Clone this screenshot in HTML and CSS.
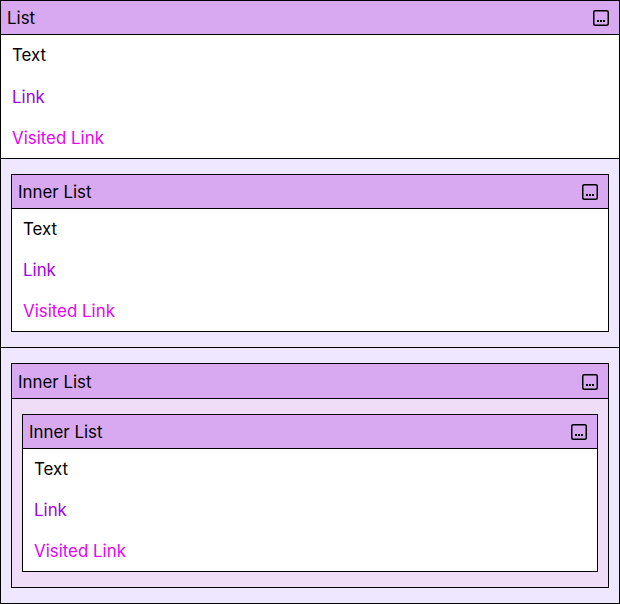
FILE: index.html
```html
<!DOCTYPE html>
<html lang="en">
<head>
<meta charset="utf-8">
<title>List</title>
<link rel="stylesheet" href="styles.css">
</head>
<body>
<svg class="defs" width="0" height="0" aria-hidden="true">
  <symbol id="more" viewBox="0 0 16 16">
    <rect x=".75" y=".75" width="14.5" height="14.5" rx="1.5" fill="none" stroke="#000" stroke-width="1.5"/>
    <path d="M4 10h2v2h-2zM7 10h2v2h-2zM10 10h2v2h-2z" fill="#000"/>
  </symbol>
</svg>
<section class="list">
  <header class="head"><span>List</span><svg class="icon"><use href="#more"/></svg></header>
  <ul class="items items-outer">
    <li>Text</li>
    <li><a class="link">Link</a></li>
    <li><a class="visited">Visited Link</a></li>
  </ul>
  <div class="nest">
    <section class="list">
      <header class="head"><span>Inner List</span><svg class="icon"><use href="#more"/></svg></header>
      <ul class="items">
        <li>Text</li>
        <li><a class="link">Link</a></li>
        <li><a class="visited">Visited Link</a></li>
      </ul>
    </section>
  </div>
  <div class="nest">
    <section class="list">
      <header class="head head-tall"><span>Inner List</span><svg class="icon"><use href="#more"/></svg></header>
      <div class="nest nest-deep">
        <section class="list">
          <header class="head"><span>Inner List</span><svg class="icon"><use href="#more"/></svg></header>
          <ul class="items">
            <li>Text</li>
            <li><a class="link">Link</a></li>
            <li><a class="visited">Visited Link</a></li>
          </ul>
        </section>
      </div>
    </section>
  </div>
</section>
</body>
</html>
```
FILE: styles.css
```css
* { box-sizing: border-box; }
body { margin: 0; font: 370 16.9px/21px Inter, sans-serif; color: #000; }
.defs { display: none; }
.list { border: 1px solid #000; background: #fff; }
.head {
  display: flex;
  align-items: center;
  justify-content: space-between;
  height: 33px;
  padding: 1px 10px 0 6px;
  background: #d8a9f0;
}
.head-tall { height: 34px; padding-top: 2px; }
.icon { width: 16px; height: 16px; }
.items {
  display: grid;
  grid-auto-rows: 41px;
  height: 123px;
  margin: 0;
  padding: 0 11px;
  border-top: 1px solid #000;
  list-style: none;
}
.items li { padding-top: 10px; }
.items-outer { height: 124px; grid-auto-rows: 41.5px; }
.link { color: #9d00ec; }
.visited { color: #ea00f2; }
.nest {
  padding: 15px 10px;
  border-top: 1px solid #000;
  background: #efe7ff;
}
.nest-deep { background: #efdcf7; }
```
